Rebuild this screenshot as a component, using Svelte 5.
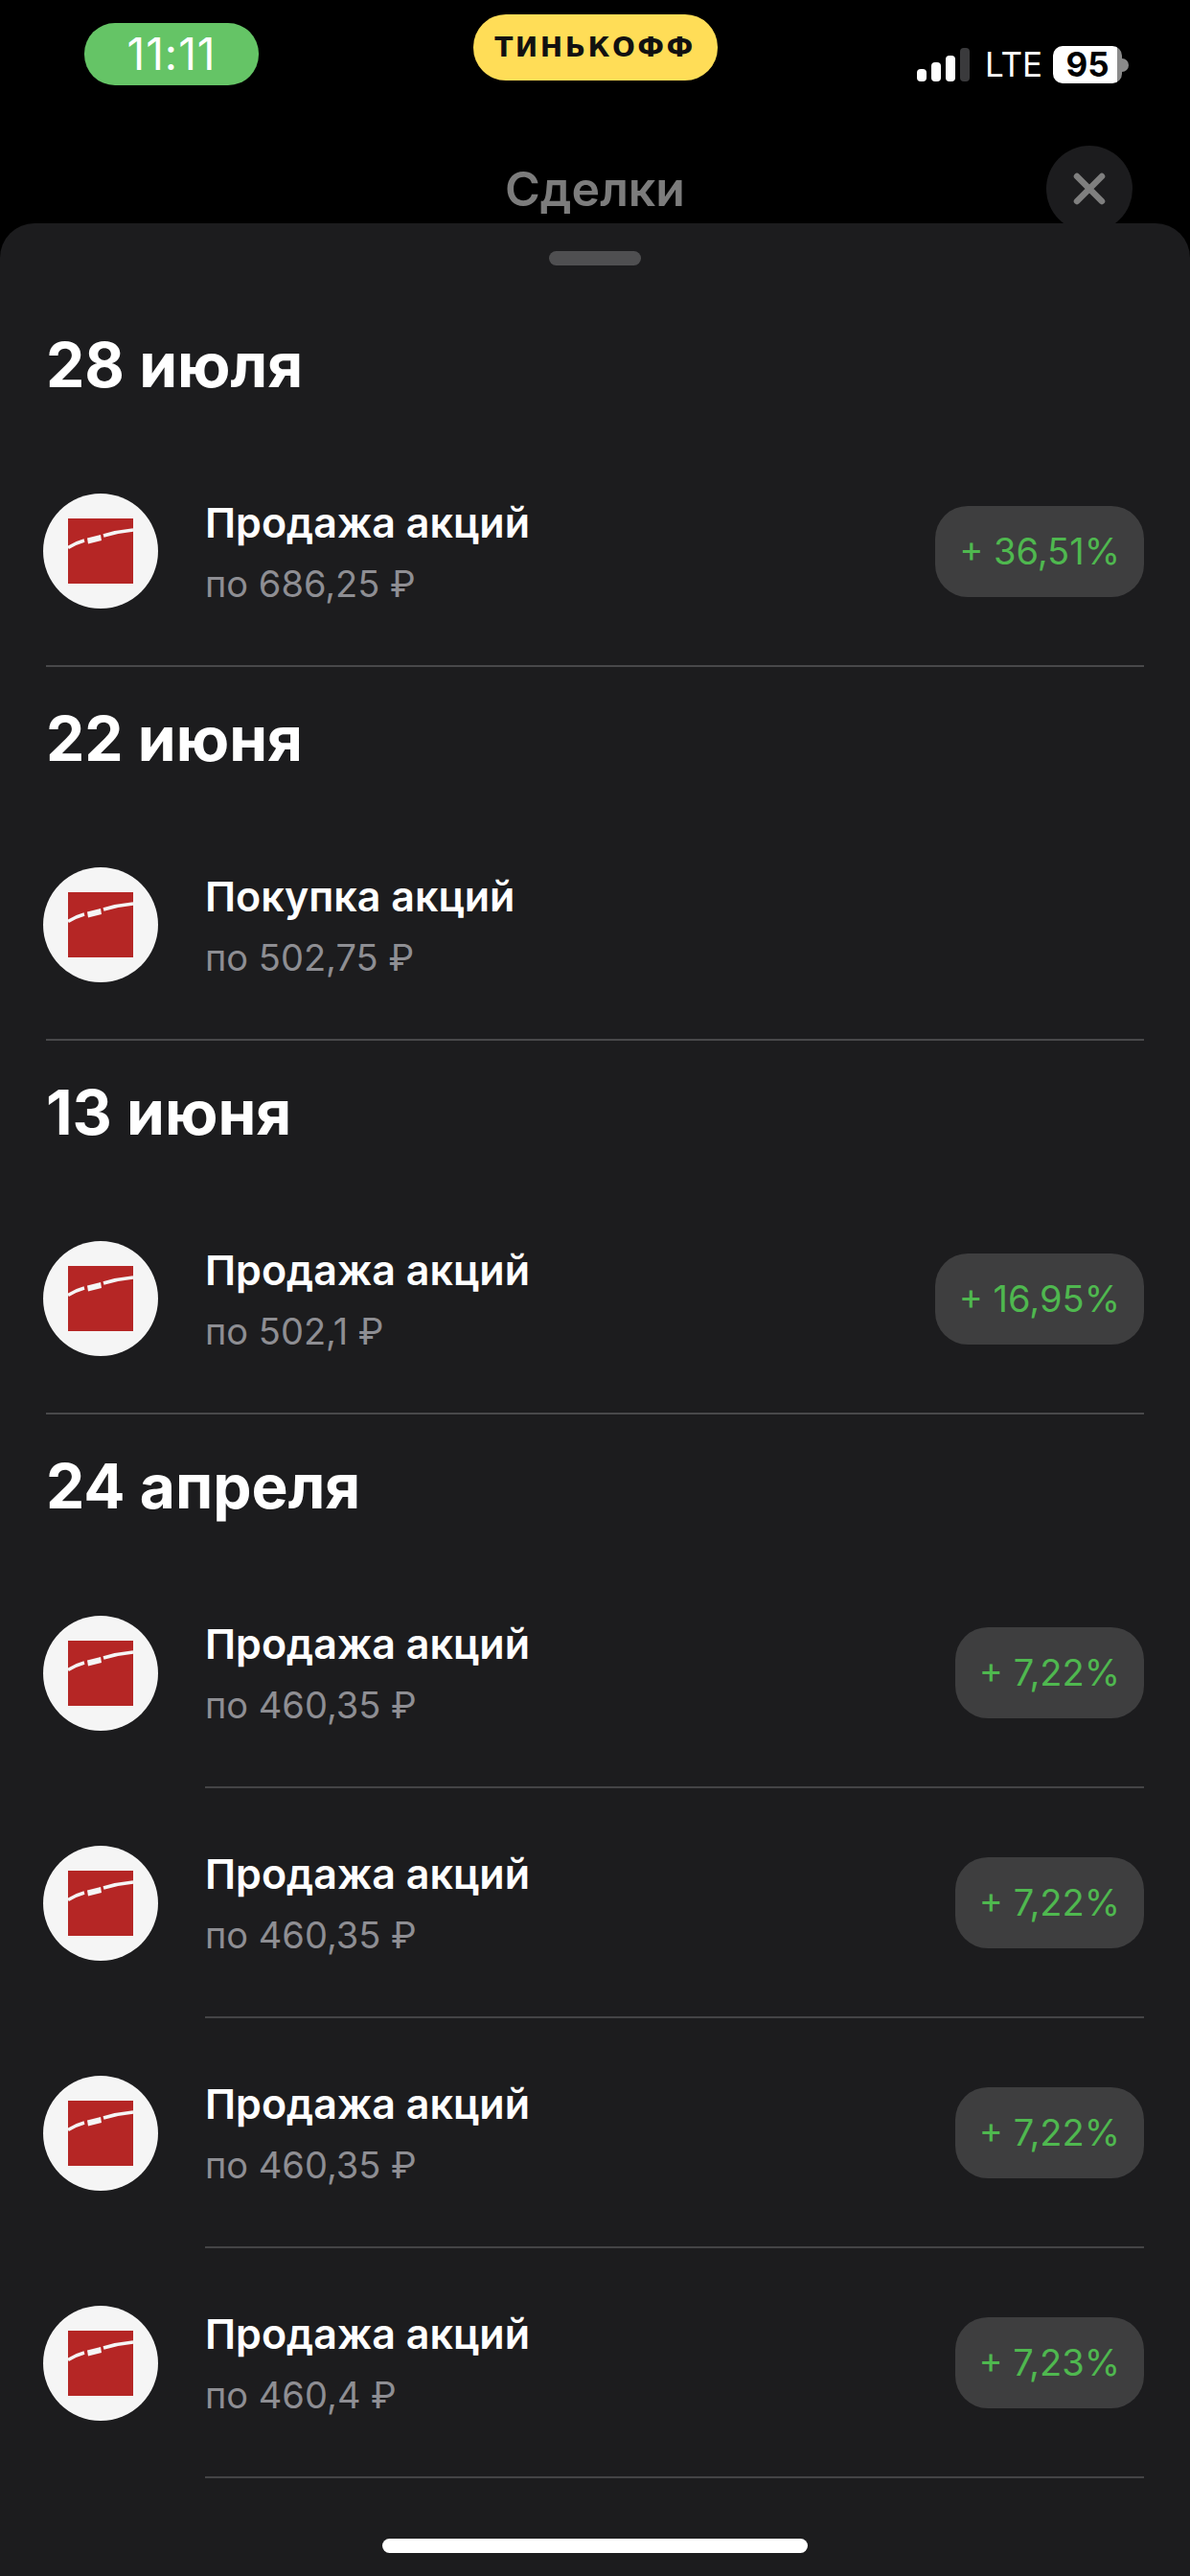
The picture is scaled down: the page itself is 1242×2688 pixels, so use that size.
<script lang="ts">
  const groups = [
    { date: "28 июля", full: true, rows: [{ title: "Продажа акций", price: "по 686,25 ₽", gain: "+ 36,51%" }] },
    { date: "22 июня", full: true, rows: [{ title: "Покупка акций", price: "по 502,75 ₽", gain: "" }] },
    { date: "13 июня", full: true, rows: [{ title: "Продажа акций", price: "по 502,1 ₽", gain: "+ 16,95%" }] },
    {
      date: "24 апреля",
      full: false,
      rows: [
        { title: "Продажа акций", price: "по 460,35 ₽", gain: "+ 7,22%" },
        { title: "Продажа акций", price: "по 460,35 ₽", gain: "+ 7,22%" },
        { title: "Продажа акций", price: "по 460,35 ₽", gain: "+ 7,22%" },
        { title: "Продажа акций", price: "по 460,4 ₽", gain: "+ 7,23%" },
      ],
    },
  ];
</script>

<div class="page">
  <div class="status">
    <div class="clock">11:11</div>
    <div class="brand">ТИНЬКОФФ</div>
    <div class="indicators">
      <svg class="signal" width="55" height="35" viewBox="0 0 55 35">
        <rect x="0" y="22" width="10" height="13" rx="4" fill="#fff" />
        <rect x="15" y="15" width="10" height="20" rx="4" fill="#fff" />
        <rect x="30" y="8" width="10" height="27" rx="4" fill="#fff" />
        <rect x="45" y="0" width="10" height="35" rx="4" fill="#3a3a3c" />
      </svg>
      <span class="lte">LTE</span>
      <div class="battery">
        <div class="charge">95</div>
        <div class="nub"></div>
      </div>
    </div>
  </div>

  <div class="header">
    <div></div>
    <div class="title">Сделки</div>
    <div class="close">
      <svg width="34" height="34" viewBox="0 0 34 34">
        <path d="M4 4 L30 30 M30 4 L4 30" stroke="#7f7f7f" stroke-width="6.5" stroke-linecap="round" />
      </svg>
    </div>
  </div>

  <div class="sheet">
    <div class="handle"></div>
    <div class="list">
      {#each groups as group}
        <div class="group-head">{group.date}</div>
        {#each group.rows as row}
          <div class="row {group.full ? 'full' : ''}">
            <div class="avatar">
              <svg width="68" height="68" viewBox="0 0 68 68">
                <rect width="68" height="68" fill="#b52625" />
                <path d="M0 30.5 Q8 25.5 17 23" stroke="#f5f5f5" stroke-width="3.5" fill="none" />
                <path d="M20 20.5 L34 17 L35 23 L21 26.5 Z" fill="#f5f5f5" />
                <path d="M37 18 Q52 13.5 68 12" stroke="#f5f5f5" stroke-width="3.5" fill="none" />
              </svg>
            </div>
            <div class="body">
              <div class="text">
                <div class="name">{row.title}</div>
                <div class="price">{row.price}</div>
              </div>
              {#if row.gain}
                <div class="gain">{row.gain}</div>
              {/if}
            </div>
          </div>
        {/each}
      {/each}
    </div>
    <div class="home"></div>
  </div>
</div>

<style>
  :global(body) {
    margin: 0;
    background: #000;
  }

  .page {
    width: 1242px;
    height: 2688px;
    background: #000;
    overflow: hidden;
    font-family: Inter, "Noto Sans", sans-serif;
    color: #fff;
  }

  .status {
    display: grid;
    grid-template-columns: 1fr auto 1fr;
    height: 152px;
    align-items: start;
  }

  .clock {
    width: 182px;
    height: 65px;
    margin: 24px 0 0 88px;
    border-radius: 32px;
    background: #65c466;
    font-size: 46px;
    letter-spacing: 1px;
    line-height: 65px;
    text-align: center;
  }

  .brand {
    width: 255px;
    height: 69px;
    margin-top: 15px;
    border-radius: 34px;
    background: #ffdd57;
    color: #111;
    font-family: "DejaVu Sans", sans-serif;
    font-size: 28px;
    font-weight: 700;
    letter-spacing: 2.5px;
    line-height: 69px;
    text-align: center;
  }

  .indicators {
    display: flex;
    justify-content: flex-end;
    align-items: center;
    height: 39px;
    margin-top: 48px;
    padding-right: 64px;
  }

  .signal {
    margin-right: 16px;
  }

  .lte {
    width: 54px;
    margin-right: 17px;
    font-size: 35px;
    line-height: 39px;
  }

  .battery {
    display: flex;
    align-items: center;
  }

  .charge {
    width: 72px;
    height: 39px;
    border-radius: 10px;
    background: linear-gradient(90deg, #fff 93%, #8a8a8a 93%);
    color: #000;
    font-size: 35px;
    font-weight: 700;
    line-height: 39px;
    text-align: center;
  }

  .nub {
    width: 7px;
    height: 14px;
    border-radius: 0 7px 7px 0;
    background: #8a8a8a;
  }

  .header {
    display: grid;
    grid-template-columns: 1fr auto 1fr;
    align-items: start;
    height: 81px;
    overflow: hidden;
  }

  .title {
    color: #7c7c7c;
    font-size: 50px;
    font-weight: 600;
    line-height: 90px;
  }

  .close {
    display: flex;
    justify-self: end;
    justify-content: center;
    align-items: center;
    width: 90px;
    height: 90px;
    margin-right: 60px;
    border-radius: 50%;
    background: #1c1c1e;
  }

  .sheet {
    position: relative;
    height: 2455px;
    border-radius: 36px 36px 0 0;
    background: #1c1c1e;
  }

  .handle {
    width: 96px;
    height: 15px;
    margin: 0 auto;
    position: relative;
    top: 29px;
    border-radius: 8px;
    background: #4f4f51;
  }

  .list {
    padding: 58px 48px 0;
  }

  .group-head {
    height: 150px;
    font-size: 64px;
    font-weight: 700;
    line-height: 150px;
  }

  .row {
    display: flex;
    height: 240px;
    box-sizing: border-box;
  }

  .row.full {
    border-bottom: 2px solid #48484a;
  }

  .avatar {
    display: flex;
    flex: none;
    justify-content: center;
    align-items: center;
    align-self: center;
    width: 120px;
    height: 120px;
    margin-left: -3px;
    border-radius: 50%;
    background: #f5f5f5;
  }

  .body {
    display: flex;
    flex: 1;
    justify-content: space-between;
    align-items: center;
    margin-left: 49px;
    box-sizing: border-box;
    border-bottom: 2px solid #444446;
  }

  .row.full .body {
    border-bottom: 0;
  }

  .text {
    padding-top: 3px;
  }

  .name {
    font-size: 43px;
    font-weight: 600;
    line-height: 50px;
  }

  .price {
    margin-top: 14px;
    color: #8e8e93;
    font-size: 38px;
    line-height: 50px;
  }

  .gain {
    height: 95px;
    padding: 0 25px;
    border-radius: 34px;
    background: #3e3e3f;
    color: #4fb84f;
    font-size: 38px;
    line-height: 95px;
  }

  .home {
    position: absolute;
    left: 399px;
    top: 2416px;
    width: 444px;
    height: 15px;
    border-radius: 8px;
    background: #fff;
  }
</style>
